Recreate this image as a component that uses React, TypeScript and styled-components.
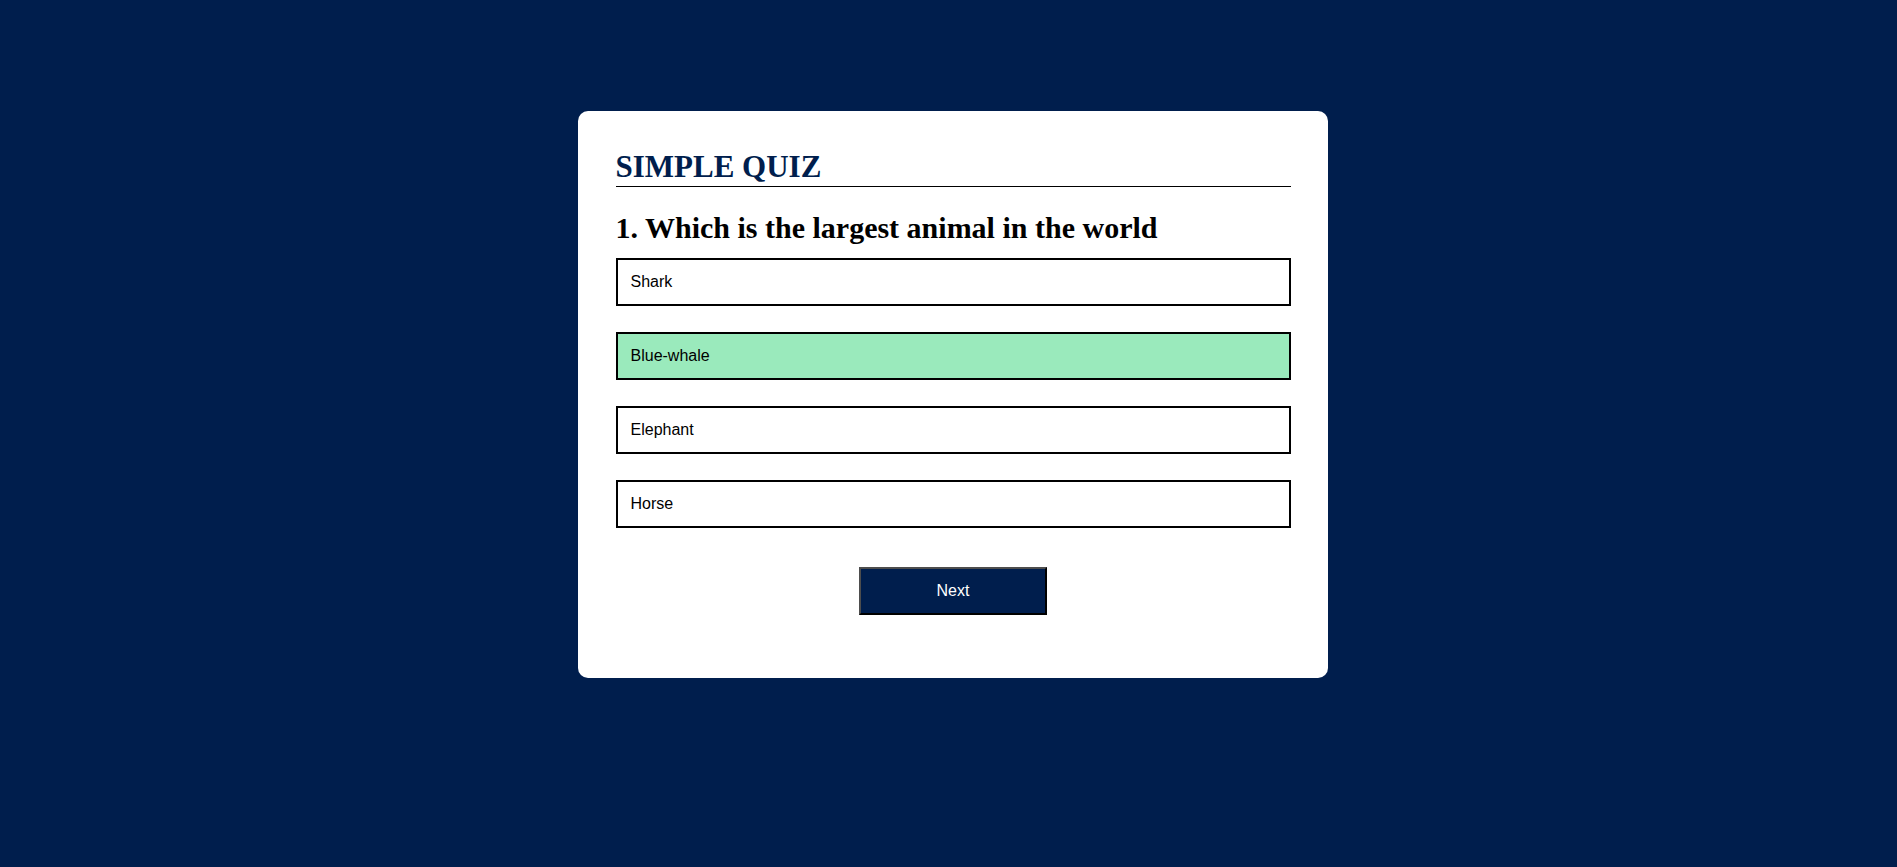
import React from "react";
import styled, { createGlobalStyle } from "styled-components";

const Global = createGlobalStyle`
  html, body { margin: 0; padding: 0; background: #001e4d; }
  body {
    font-family: "Liberation Sans", Arial, sans-serif;
  }
`;

const Page = styled.div`
  display: flex;
  justify-content: center;
  padding: 111px 0 0 9px;
`;

const Card = styled.div`
  width: 750px;
  box-sizing: border-box;
  background: #fff;
  border-radius: 10px;
  padding: 37.5px 37.5px 63px;
`;

const Title = styled.h1`
  margin: 0;
  font-family: "Liberation Serif", "Times New Roman", serif;
  font-size: 31px;
  font-weight: 700;
  color: #001e4d;
  border-bottom: 1px solid #000;
  padding-bottom: 1px;
`;

const Question = styled.h2`
  margin: 24px 0 0;
  font-family: "Liberation Serif", "Times New Roman", serif;
  font-size: 30px;
  font-weight: 700;
  color: #000;
`;

const Answers = styled.div`
  display: flex;
  flex-direction: column;
  gap: 26px;
  margin-top: 13px;
`;

const Answer = styled.button<{ $correct?: boolean }>`
  display: block;
  width: 100%;
  height: 48px;
  box-sizing: border-box;
  border: 2px solid #000;
  background: ${(p) => (p.$correct ? "#9aeabc" : "#fff")};
  color: #000;
  font-family: "Liberation Sans", Arial, sans-serif;
  font-size: 16px;
  text-align: left;
  padding: 0 0 0 13px;
  cursor: pointer;
`;

const Footer = styled.div`
  display: flex;
  justify-content: center;
  margin-top: 39px;
`;

const NextButton = styled.button`
  width: 188px;
  height: 48px;
  box-sizing: border-box;
  background: #001e4d;
  color: #fff;
  font-family: "Liberation Sans", Arial, sans-serif;
  font-size: 16px;
  border-width: 2px;
  border-style: solid;
  border-color: #4d4d4d #000 #000 #4d4d4d;
  cursor: pointer;
`;

const answers = [
  { text: "Shark", correct: false },
  { text: "Blue-whale", correct: true },
  { text: "Elephant", correct: false },
  { text: "Horse", correct: false },
];

export default function App() {
  return (
    <>
      <Global />
      <Page>
        <Card>
          <Title>SIMPLE QUIZ</Title>
          <Question>1. Which is the largest animal in the world</Question>
          <Answers>
            {answers.map((a) => (
              <Answer key={a.text} $correct={a.correct}>
                {a.text}
              </Answer>
            ))}
          </Answers>
          <Footer>
            <NextButton>Next</NextButton>
          </Footer>
        </Card>
      </Page>
    </>
  );
}
